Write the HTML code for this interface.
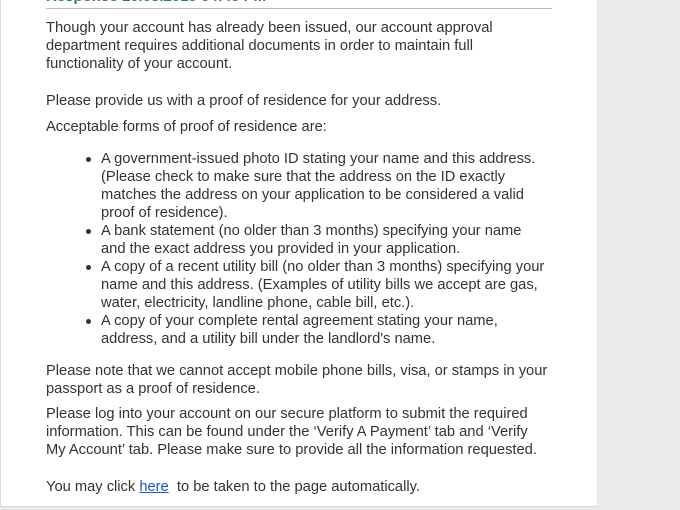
<!DOCTYPE html>
<html><head><meta charset="utf-8"><style>
html,body{margin:0;padding:0;width:680px;height:510px;overflow:hidden;background:#e9eaeb;}
.panel{position:absolute;left:0;top:0;width:596px;height:506px;background:#fff;border-left:1px solid #ddd;border-bottom:1px solid #d6d6d6;}
.t{position:absolute;left:46px;font-family:"Liberation Sans",sans-serif;font-size:14.7px;line-height:18px;color:#333;white-space:nowrap;}
.l{left:101px;}
.b{position:absolute;left:86px;width:5px;height:5px;border-radius:50%;background:#333;}
.rule{position:absolute;left:46px;top:8px;width:506px;height:1px;background:#bbb;}
.hd{position:absolute;left:46px;top:-12px;font-family:"Liberation Sans",sans-serif;font-size:15px;font-weight:bold;color:#2e7d4f;}
a{color:#1a4fd6;text-decoration:underline;}
</style></head><body>
<div class="panel"></div>
<div class="hd">Response 10.03.2019 04:45 PM</div>
<div class="rule"></div>
<div class="t" style="top:19px">Though your account has already been issued, our account approval<br>department requires additional documents in order to maintain full<br>functionality of your account.</div>
<div class="t" style="top:92px">Please provide us with a proof of residence for your address.</div>
<div class="t" style="top:118px">Acceptable forms of proof of residence are:</div>
<div class="b" style="top:157px"></div>
<div class="t l" style="top:150px">A government-issued photo ID stating your name and this address.<br>(Please check to make sure that the address on the ID exactly<br>matches the address on your application to be considered a valid<br>proof of residence).</div>
<div class="b" style="top:229px"></div>
<div class="t l" style="top:222px">A bank statement (no older than 3 months) specifying your name<br>and the exact address you provided in your application.</div>
<div class="b" style="top:265px"></div>
<div class="t l" style="top:258px">A copy of a recent utility bill (no older than 3 months) specifying your<br>name and this address. (Examples of utility bills we accept are gas,<br>water, electricity, landline phone, cable bill, etc.).</div>
<div class="b" style="top:319px"></div>
<div class="t l" style="top:312px">A copy of your complete rental agreement stating your name,<br>address, and a utility bill under the landlord's name.</div>
<div class="t" style="top:362px">Please note that we cannot accept mobile phone bills, visa, or stamps in your<br>passport as a proof of residence.</div>
<div class="t" style="top:405px">Please log into your account on our secure platform to submit the required<br>information. This can be found under the ‘Verify A Payment’ tab and ‘Verify<br>My Account’ tab. Please make sure to provide all the information requested.</div>
<div class="t" style="top:478px">You may click <a>here</a>&nbsp; to be taken to the page automatically.</div>
</body></html>
